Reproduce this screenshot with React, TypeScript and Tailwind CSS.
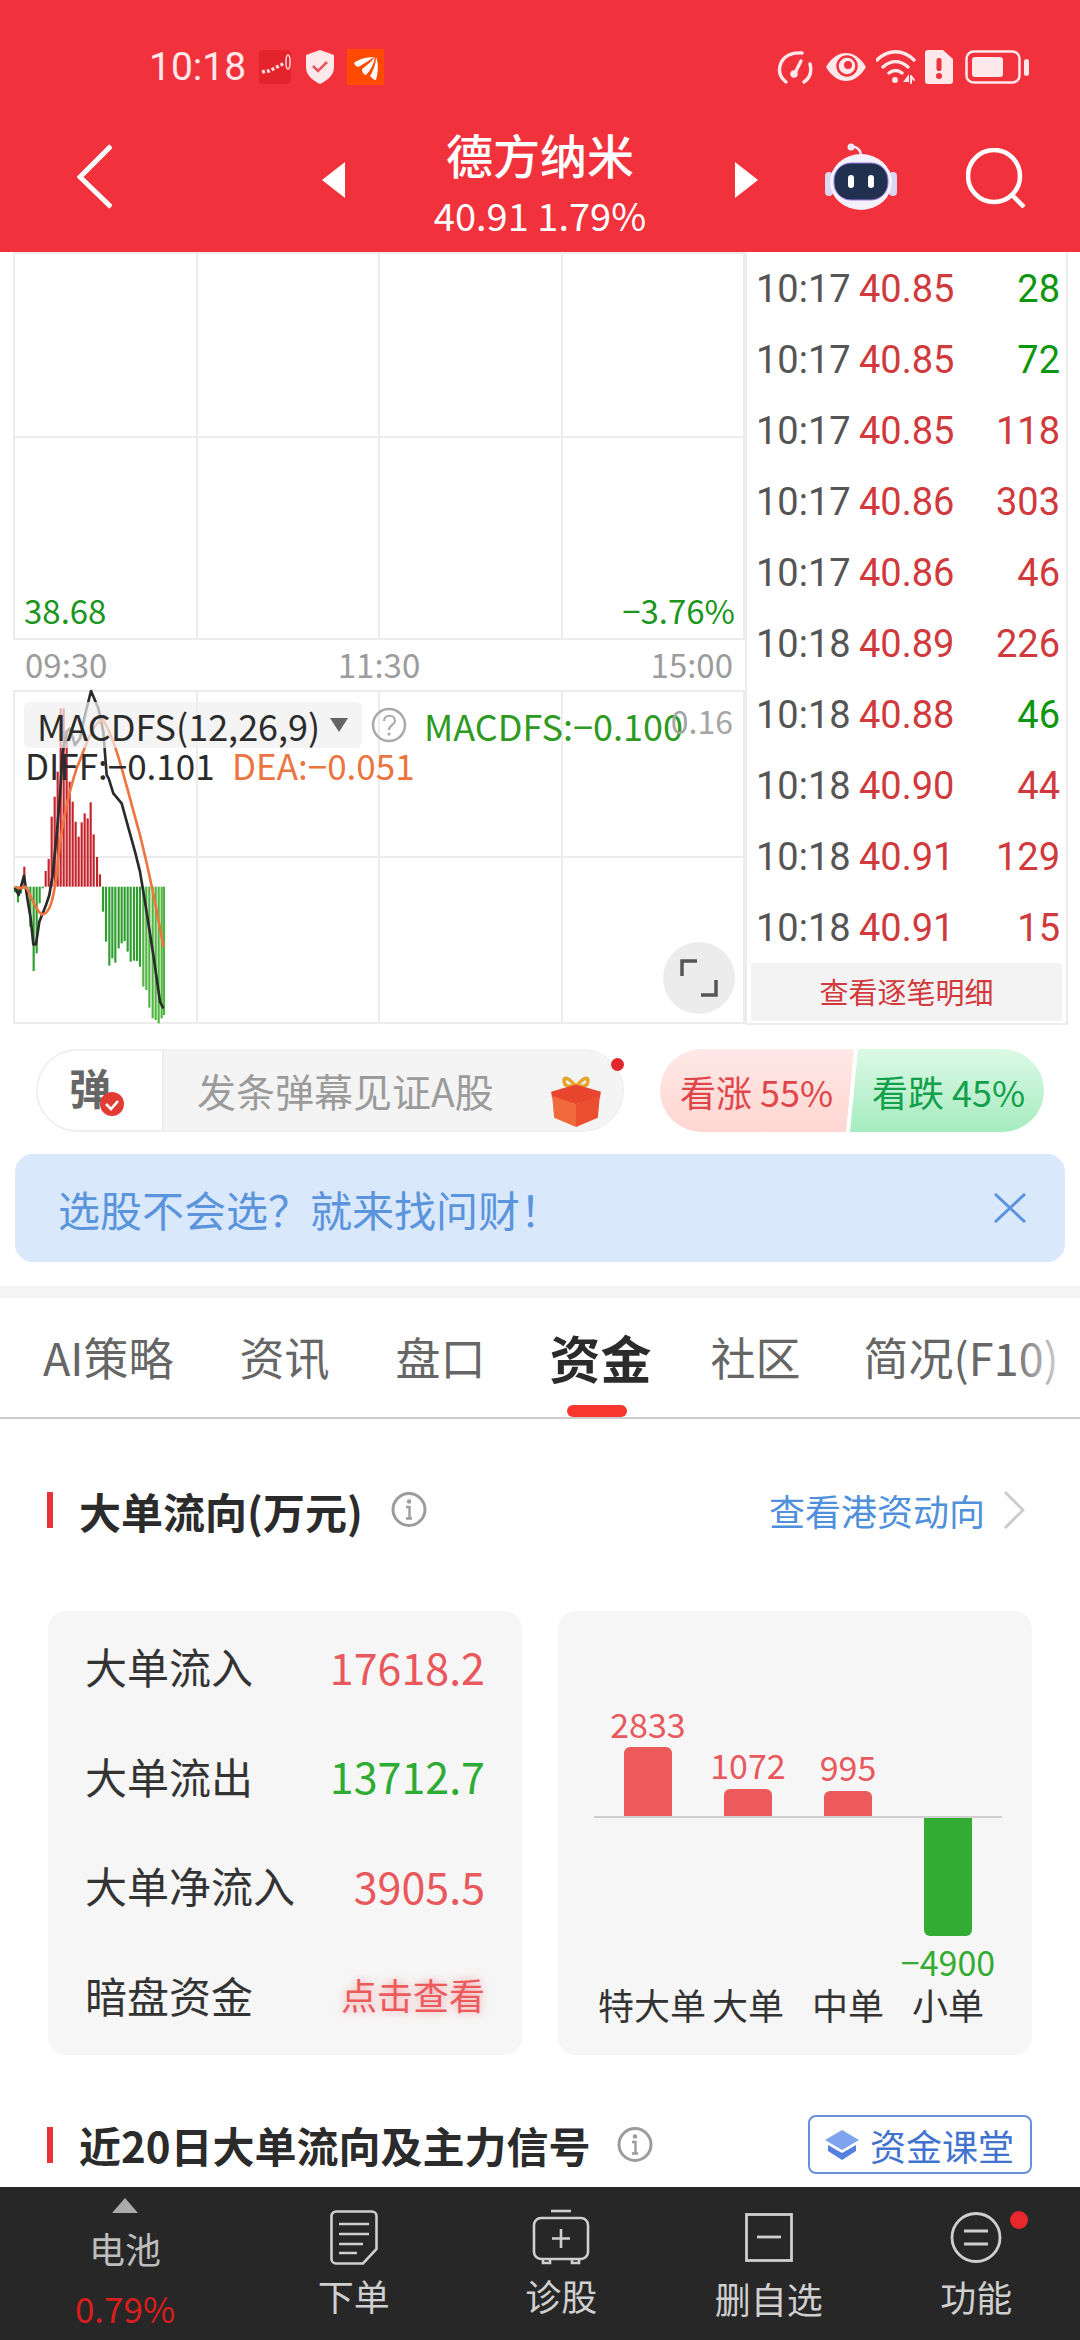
import React from "react";

const ticks = [
  ["10:17", "40.85", "28", "g"],
  ["10:17", "40.85", "72", "g"],
  ["10:17", "40.85", "118", "r"],
  ["10:17", "40.86", "303", "r"],
  ["10:17", "40.86", "46", "r"],
  ["10:18", "40.89", "226", "r"],
  ["10:18", "40.88", "46", "g"],
  ["10:18", "40.90", "44", "r"],
  ["10:18", "40.91", "129", "r"],
  ["10:18", "40.91", "15", "r"],
];

// macd bars, drawn in a 510x1035 box (3x of real pixels), baseline at y=605
const macdBars = [
  [15, 622], [24, 652], [33, 625], [43, 545], [52, 640], [61, 725], [71, 858], [80, 805], [89, 655], [98, 610],
  [107, 558], [116, 522], [125, 395], [134, 335], [143, 260], [152, 70], [161, 70], [170, 165], [179, 290], [188, 350],
  [197, 410], [206, 455], [215, 412], [224, 385], [233, 400], [242, 352], [251, 448], [261, 516], [270, 568],
  [279, 680], [288, 770], [298, 842], [307, 820], [316, 833], [326, 790], [335, 775], [344, 768], [353, 800], [362, 830],
  [372, 827], [381, 828], [390, 845], [400, 905], [409, 915], [418, 968], [428, 1000], [437, 1005], [446, 1015], [455, 1000], [462, 990],
];

function MacdChart() {
  return (
    <svg className="absolute left-[-3px] top-[-5px]" width="170" height="345" viewBox="0 0 510 1035" fill="none">
      {macdBars.map(([x, y], i) => (
        <line key={i} x1={x} x2={x} y1={605} y2={y} stroke={y < 605 ? "#c5232b" : y > 880 ? "#4fb53f" : "#2f9e2f"} strokeWidth="6.5" />
      ))}
      <path
        d="M15 608 L26 630 L42 572 L52 640 L62 700 L70 778 L78 778 L88 710 L96 690 L108 660 L118 630 L128 570 L140 450 L150 330 L158 200 L170 140 L180 130 L195 180 L210 160 L225 90 L243 18 L265 70 L280 140 L290 270 L296 280 L310 325 L335 355 L350 410 L375 500 L390 560 L405 650 L430 810 L450 950 L460 970"
        stroke="#2b2b2b"
        strokeWidth="8"
        strokeLinejoin="round"
      />
      <path
        d="M15 605 C25 610 35 612 45 605 C60 615 70 670 95 688 C120 690 130 640 140 570 C150 450 170 340 200 250 C225 190 250 105 280 105 C320 170 350 310 390 450 C420 570 445 700 460 785"
        stroke="#ee7440"
        strokeWidth="8"
        strokeLinejoin="round"
      />
    </svg>
  );
}

function GridLines({ rows }: { rows: string }) {
  return (
    <div className={`grid h-full w-[732px] grid-cols-4 border-t-2 border-l-2 border-[#ececec] ${rows}`}>
      {Array.from({ length: 8 }).map((_, i) => (
        <div key={i} className="border-r-2 border-b-2 border-[#ececec]" />
      ))}
    </div>
  );
}

function InfoIcon() {
  return (
    <svg width="36" height="37" viewBox="0 0 36 37" fill="none" stroke="#9c9c9c" strokeWidth="3">
      <circle cx="18" cy="18.5" r="16" />
      <circle cx="18" cy="10.5" r="2.2" fill="#9c9c9c" stroke="none" />
      <path d="M15 16h3.5v11M15 27.5h6" strokeWidth="2.4" />
    </svg>
  );
}

function SectionBar() {
  return <div className="h-[36px] w-[6px] bg-[#e63438]" />;
}

function NavLabel({ label }: { label: string }) {
  return <span className="mt-[8px] text-[36px] leading-[44px] text-[#cfcfcf]">{label}</span>;
}

export default function App() {
  return (
    <div className="flex h-[2340px] w-[1080px] flex-col overflow-hidden bg-white font-['Noto_Sans_CJK_SC','Noto_Sans',sans-serif]">
      <div className="flex-1 overflow-hidden">
        {/* header */}
        <header className="h-[252px] bg-[#f1323c] text-white">
          <div className="mt-0 flex h-[50px] translate-y-[42px] items-center justify-between pr-[50px] pl-[149px]">
            <div className="flex items-center">
              <span className="font-['Roboto',sans-serif] text-[39px] text-[#ffe8ea]">10:18</span>
              <svg className="ml-[13px]" width="32" height="34" viewBox="0 0 32 34">
                <rect width="32" height="34" rx="4" fill="#e4242c" />
                <path d="M3 22l4-1 3 0 4-2 4-2 4-2 3-2" stroke="#ffd8d8" strokeWidth="3.5" strokeDasharray="3 2" fill="none" />
                <ellipse cx="29" cy="12" rx="2" ry="7" fill="none" stroke="#ffd8d8" strokeWidth="1.5" />
              </svg>
              <svg className="ml-[15px]" width="28" height="34" viewBox="0 0 28 34">
                <path d="M14 0l14 5v12c0 8-6 13-14 17C6 30 0 25 0 17V5z" fill="#ffe8ea" />
                <path d="M7 16l5 5 9-9" fill="none" stroke="#e5555c" strokeWidth="2.5" />
              </svg>
              <svg className="ml-[13px]" width="37" height="36" viewBox="0 0 37 36">
                <rect width="37" height="36" fill="#ff4a00" />
                <path d="M27 8C20 8 12 10 7 14c1 3 4 5 6 3 5-3 10-6 14-9z" fill="#fff" />
                <path d="M28 8c-4 5-8 8-13 12 0 3 2 6 4 6 4-4 8-11 9-18z" fill="#fff" />
                <path d="M29 8c0 8-4 16-6 19 2 2 4 4 6 4 2-7 3-16 0-23z" fill="#fff" />
              </svg>
            </div>
            <div className="flex items-center">
              <svg width="36" height="34" viewBox="0 0 36 34" fill="none" stroke="#ffe8ea" strokeWidth="3.4" strokeLinecap="round">
                <path d="M9 32C3 27 1 20 4 13 7 6 15 2 25 3" />
                <path d="M27 32c6-4 8-10 6-18" />
                <path d="M18 23l6-12" />
                <circle cx="17" cy="24" r="2" fill="#ffe8ea" />
              </svg>
              <svg className="ml-[12px]" width="42" height="30" viewBox="0 0 42 30">
                <path d="M1 15C7 5 14 1 21 1s14 4 20 14c-6 10-13 14-20 14S7 25 1 15z" fill="#ffe8ea" />
                <circle cx="22" cy="14" r="9.5" fill="none" stroke="#f1323c" strokeWidth="2.5" />
                <circle cx="23" cy="13" r="4" fill="#f1323c" />
              </svg>
              <svg className="ml-[9px]" width="41" height="34" viewBox="0 0 41 34" fill="none" stroke="#ffe8ea" strokeWidth="3.4" strokeLinecap="round">
                <path d="M1 10c11-11 26-11 37 0M7 17c8-7 17-7 25 0M13 23c4-3 9-3 13 0" />
                <circle cx="19" cy="30" r="3" fill="#ffe8ea" stroke="none" />
                <path d="M29 31l3-4v4zM35 26v7M35 26l3 4" strokeWidth="2" />
              </svg>
              <svg className="ml-[8px]" width="28" height="34" viewBox="0 0 28 34">
                <path d="M3 0h15l10 9v22a3 3 0 01-3 3H3a3 3 0 01-3-3V3a3 3 0 013-3z" fill="#ffe8ea" />
                <rect x="11.5" y="8" width="5" height="13" rx="2" fill="#f1323c" />
                <circle cx="14" cy="26" r="3" fill="#f1323c" />
              </svg>
              <svg className="ml-[12px]" width="65" height="34" viewBox="0 0 65 34">
                <rect x="1.5" y="1.5" width="53" height="31" rx="7" fill="none" stroke="#ffe8ea" strokeWidth="2.5" />
                <rect x="7" y="7" width="31" height="20" rx="3" fill="#ffe8ea" />
                <rect x="59" y="9" width="5" height="17" rx="2.5" fill="#ffe8ea" />
              </svg>
            </div>
          </div>

          <div className="flex h-[110px] translate-y-[80px] items-start">
            <svg className="mt-[14px] ml-[77px]" width="35" height="65" viewBox="0 0 35 65" fill="none" stroke="#fff" strokeWidth="5">
              <path d="M34 2L3 33l31 30" />
            </svg>
            <svg className="mt-[32px] ml-[210px]" width="23" height="36" viewBox="0 0 23 36">
              <path d="M23 0v36L0 18z" fill="#fff" />
            </svg>
            <div className="flex w-[390px] flex-col items-center">
              <div className="-mt-[1px] text-[47px] leading-[50px] font-medium">德方纳米</div>
              <div className="mt-[14px] text-[38px] leading-[44px]">40.91 1.79%</div>
            </div>
            <svg className="mt-[32px]" width="23" height="36" viewBox="0 0 23 36">
              <path d="M0 0v36l23-18z" fill="#fff" />
            </svg>
            <svg className="mt-[13px] ml-[67px]" width="72" height="67" viewBox="0 0 72 67">
              <path d="M26 4c5-1 9 2 10 7" fill="none" stroke="#ece8fa" strokeWidth="2.5" />
              <circle cx="26" cy="4" r="3.5" fill="#ece8fa" />
              <rect x="0" y="29" width="8" height="24" rx="4" fill="#dcd8f4" />
              <rect x="64" y="29" width="8" height="24" rx="4" fill="#dcd8f4" />
              <ellipse cx="36" cy="39" rx="31" ry="28" fill="#f3f1fc" />
              <rect x="9" y="20" width="54" height="37" rx="17" fill="#22304f" stroke="#9b7be8" strokeWidth="1" />
              <rect x="23" y="32" width="6" height="13" rx="3" fill="#fff" />
              <rect x="43" y="32" width="6" height="13" rx="3" fill="#fff" />
            </svg>
            <svg className="mt-[18px] ml-[69px]" width="60" height="60" viewBox="0 0 60 60" fill="none" stroke="#fff" strokeWidth="4.5">
              <circle cx="28" cy="28" r="26" />
              <path d="M46 47l12 12" />
            </svg>
          </div>
        </header>

        {/* charts + tick list */}
        <div className="flex h-[773px] pl-[13px]">
          <div className="w-[732px] shrink-0">
            <div className="relative h-[388px]">
              <GridLines rows="grid-rows-[184px_1fr]" />
              <span className="absolute top-[338px] left-[11px] text-[33px] leading-[40px] text-[#1b951b]">38.68</span>
              <span className="absolute top-[338px] right-[10px] text-[33px] leading-[40px] text-[#1b951b]">−3.76%</span>
            </div>
            <div className="flex h-[50px] items-center justify-between pr-[12px] pl-[12px] text-[33px] text-[#9c9c9c]">
              <span>09:30</span>
              <span>11:30</span>
              <span>15:00</span>
            </div>
            <div className="relative h-[334px]">
              <GridLines rows="grid-rows-2" />
              <MacdChart />
              <div className="absolute top-[12px] left-[11px] flex h-[46px] w-[338px] items-center rounded-[6px] bg-[#efefef]/70 pl-[13px] text-[36px] leading-none whitespace-nowrap text-[#2b2b2b]">
                MACDFS(12,26,9)
                <svg className="ml-[10px]" width="18" height="14" viewBox="0 0 18 14">
                  <path d="M0 0h18L9 14z" fill="#666" />
                </svg>
              </div>
              <svg className="absolute top-[17px] left-[358px]" width="36" height="36" viewBox="0 0 36 36" fill="none">
                <circle cx="18" cy="18" r="16" stroke="#aaa" strokeWidth="2.5" />
                <path d="M13 14c0-7 11-7 11 0 0 4-6 4-6 9" stroke="#aaa" strokeWidth="2.2" />
                <circle cx="18" cy="27" r="1.6" fill="#aaa" />
              </svg>
              <span className="absolute top-[15px] left-[411px] text-[36px] leading-[40px] whitespace-nowrap text-[#2f9a22]">MACDFS:−0.100</span>
              <span className="absolute top-[10px] right-[12px] text-[32px] leading-[40px] text-[#a5a5a5]">0.16</span>
              <span className="absolute top-[55px] left-[12px] text-[35px] leading-[40px] whitespace-nowrap text-[#2b2b2b]">DIFF:−0.101</span>
              <span className="absolute top-[55px] left-[219px] text-[35px] leading-[40px] whitespace-nowrap text-[#ea7540]">DEA:−0.051</span>
              <div className="absolute top-[252px] right-[10px] flex h-[72px] w-[72px] items-center justify-center rounded-full bg-[#ececec]">
                <svg width="38" height="38" viewBox="0 0 38 38" fill="none" stroke="#555" strokeWidth="3.5">
                  <path d="M2 17V2h15M36 21v15H21" />
                </svg>
              </div>
            </div>
          </div>
          <div className="h-[773px] w-[323px] border-x-2 border-b-2 border-[#ececec] pt-[1px]">
            {ticks.map(([t, p, v, c], i) => (
              <div key={i} className="flex h-[71px] items-center pl-[9px] font-['Roboto',sans-serif] text-[38px] leading-none">
                <span className="w-[103px] text-[#555]">{t}</span>
                <span className="text-[#d03a3d]">{p}</span>
                <span className={`ml-auto pr-[6px] ${c === "g" ? "text-[#0e960e]" : "text-[#d03a3d]"}`}>{v}</span>
              </div>
            ))}
            <div className="mx-[4px] flex h-[58px] items-center justify-center bg-[#f3f3f3] text-[29px] text-[#d2393c]">
              查看逐笔明细
            </div>
          </div>
        </div>

        {/* barrage + vote */}
        <div className="mt-[24px] flex h-[83px] pl-[36px]">
          <div className="relative flex w-[588px] overflow-visible rounded-full border-2 border-[#efefef]">
            <div className="relative flex w-[124px] items-center justify-center rounded-l-full bg-white">
              <span className="mr-[20px] mb-[8px] text-[42px] leading-none font-bold text-[#666]">弹</span>
              <svg className="absolute top-[41px] left-[62px]" width="24" height="24" viewBox="0 0 24 24" fill="none">
                <circle cx="12" cy="12" r="12" fill="#e23b33" />
                <path d="M6 12l5 5 7-8" stroke="#fff" strokeWidth="2.6" />
              </svg>
            </div>
            <div className="flex flex-1 items-center rounded-r-full border-l-2 border-[#eee] bg-[#f4f4f4] pl-[33px] text-[39px] whitespace-nowrap text-[#9b9b9b]">
              发条弹幕见证A股
              <svg className="absolute top-[22px] left-[512px]" width="52" height="54" viewBox="0 0 50 52">
                <path d="M24 12C16 2 12 4 14 10c1 3 6 3 10 2zM26 12c8-10 12-8 10-2-1 3-6 3-10 2z" fill="none" stroke="#e6a52c" strokeWidth="3.5" />
                <path d="M1 18l24-7 24 7-1 6-23 6L2 24z" fill="#e7452e" />
                <path d="M2 22l23 8v22L4 43z" fill="#f06a3c" />
                <path d="M48 22l-23 8v22l21-9z" fill="#e94e2f" />
              </svg>
            </div>
            <span className="absolute top-[7px] right-[-2px] h-[13px] w-[13px] rounded-full bg-[#e2272d]" />
          </div>
          <div className="ml-[36px] flex h-[83px]">
            <div className="flex w-[194px] items-center rounded-l-full bg-gradient-to-b from-[#ffe9e6] to-[#ffd6d2] pl-[20px] text-[36px] whitespace-nowrap text-[#e0454a] [clip-path:polygon(0_0,100%_0,186px_100%,0_100%)]">
              看涨 55%
            </div>
            <div className="-ml-[4px] flex w-[194px] items-center rounded-r-full bg-gradient-to-b from-[#dcf9e6] to-[#a5ebc0] pl-[22px] text-[36px] whitespace-nowrap text-[#13a04b] [clip-path:polygon(8px_0,100%_0,100%_100%,0_100%)]">
              看跌 45%
            </div>
          </div>
        </div>

        {/* banner */}
        <div className="mx-[15px] mt-[22px] flex h-[108px] items-center justify-between rounded-[18px] bg-[#d9e8fb] pr-[39px] pl-[43px] text-[42px] text-[#5a94dc]">
          <span className="whitespace-nowrap">选股不会选？就来找问财！</span>
          <svg width="32" height="30" viewBox="0 0 32 30" fill="none" stroke="#5a94dc" strokeWidth="3">
            <path d="M1 1l30 28M31 1L1 29" />
          </svg>
        </div>

        <div className="mt-[24px] h-[12px] bg-[#f5f5f5]" />

        {/* tabs */}
        <div className="relative flex h-[121px] items-center gap-[66px] overflow-hidden border-b-2 border-[#cccccc] pb-[1px] pl-[43px] text-[45px] whitespace-nowrap text-[#666]">
          <span>AI策略</span>
          <span>资讯</span>
          <span>盘口</span>
          <span className="relative -mr-[7px] -ml-[2px] text-[51px] font-bold text-[#2b2b2b]">资金</span>
          <span>社区</span>
          <span className="-ml-[3px]">简况(F10)</span>
          <span className="absolute bottom-0 left-[567px] h-[12px] w-[60px] rounded-full bg-[#f8362f]" />
          <span className="absolute top-0 right-0 h-full w-[70px] bg-gradient-to-r from-white/0 to-white" />
        </div>

        {/* big order flow */}
        <div className="mt-[71px] flex h-[40px] items-center pr-[55px] pl-[47px]">
          <SectionBar />
          <span className="ml-[26px] text-[42px] font-bold whitespace-nowrap text-[#2b2b2b]">大单流向(万元)</span>
          <span className="ml-[28px] -translate-y-[1px]">
            <InfoIcon />
          </span>
          <span className="ml-auto text-[36px] text-[#4f8fdb]">查看港资动向</span>
          <svg className="ml-[18px]" width="22" height="40" viewBox="0 0 22 40" fill="none" stroke="#ccc" strokeWidth="3">
            <path d="M2 2l18 18L2 38" />
          </svg>
        </div>

        <div className="mt-[81px] flex gap-[36px] px-[48px]">
          <div className="grid h-[444px] w-[474px] grid-rows-4 rounded-[18px] bg-[#f6f6f6] pr-[37px] pb-[6px] pl-[37px] text-[42px] text-[#333]">
            <div className="flex items-center justify-between">
              <span>大单流入</span>
              <span className="text-[43px] text-[#e8585c]">17618.2</span>
            </div>
            <div className="flex items-center justify-between">
              <span>大单流出</span>
              <span className="text-[43px] text-[#2eab35]">13712.7</span>
            </div>
            <div className="flex items-center justify-between">
              <span>大单净流入</span>
              <span className="text-[43px] text-[#e8585c]">3905.5</span>
            </div>
            <div className="flex items-center justify-between">
              <span>暗盘资金</span>
              <span className="text-[36px] text-[#ec5a5c] [text-shadow:0_0_10px_rgba(236,90,92,0.55)]">点击查看</span>
            </div>
          </div>

          <div className="h-[444px] w-[474px] rounded-[18px] bg-[#f6f6f6] pr-[30px] pl-[36px]">
            <div className="grid h-[207px] grid-cols-4 items-end border-b-2 border-[#cfcfcf] px-[4px] text-[34px] leading-[40px] text-[#e8585c]">
              <div className="flex flex-col items-center">
                <span className="mb-[3px]">2833</span>
                <div className="h-[69px] w-[48px] rounded-t-[6px] bg-[#ec5a5c]" />
              </div>
              <div className="flex flex-col items-center">
                <span className="mb-[4px]">1072</span>
                <div className="h-[27px] w-[48px] rounded-t-[6px] bg-[#ec5a5c]" />
              </div>
              <div className="flex flex-col items-center">
                <span className="mb-[4px]">995</span>
                <div className="h-[25px] w-[48px] rounded-t-[6px] bg-[#ec5a5c]" />
              </div>
              <div />
            </div>
            <div className="grid h-[148px] grid-cols-4 px-[4px]">
              <div />
              <div />
              <div />
              <div className="flex flex-col items-center whitespace-nowrap">
                <div className="h-[118px] w-[48px] rounded-b-[6px] bg-[#34ac34]" />
                <span className="mt-[6px] text-[34px] leading-[40px] text-[#34ac34]">−4900</span>
              </div>
            </div>
            <div className="grid grid-cols-4 px-[4px] pt-[16px] text-[36px] leading-[44px] text-[#333]">
              <span className="text-center whitespace-nowrap">特大单</span>
              <span className="text-center">大单</span>
              <span className="text-center">中单</span>
              <span className="text-center">小单</span>
            </div>
          </div>
        </div>

        {/* 20 day flow title */}
        <div className="mt-[60px] flex h-[59px] items-center pr-[48px] pl-[47px]">
          <SectionBar />
          <span className="ml-[26px] text-[42px] font-bold whitespace-nowrap text-[#2b2b2b]">近20日大单流向及主力信号</span>
          <span className="ml-[26px]">
            <InfoIcon />
          </span>
          <div className="ml-auto flex h-[59px] w-[224px] items-center rounded-[8px] border-2 border-[#6a90d6] pl-[15px] text-[36px] whitespace-nowrap text-[#4272cf]">
            <svg width="34" height="30" viewBox="0 0 34 30">
              <path d="M17 0l17 10-17 10L0 10z" fill="#7ea4ee" />
              <path d="M3 15l14 8 14-8v6l-14 9-14-9z" fill="#5580e0" />
            </svg>
            <span className="ml-[11px]">资金课堂</span>
          </div>
        </div>
      </div>

      {/* bottom bar */}
      <nav className="grid h-[153px] shrink-0 grid-cols-[250px_repeat(4,207.5px)] bg-[#272727]">
        <div className="flex flex-col items-center pt-[11px]">
          <svg width="26" height="15" viewBox="0 0 26 15">
            <path d="M13 0l13 15H0z" fill="#aaa" />
          </svg>
          <span className="mt-[13px] text-[36px] leading-[44px] text-[#bdbdbd]">电池</span>
          <span className="mt-[16px] text-[35px] leading-[44px] text-[#d81e1e]">0.79%</span>
        </div>
        <div className="flex flex-col items-center pt-[23px]">
          <svg width="48" height="55" viewBox="0 0 48 55" fill="none" stroke="#cfcfcf" strokeWidth="2.6">
            <path d="M6 1.5h36a4.5 4.5 0 014.5 4.5v33L33 53.5H6A4.5 4.5 0 011.5 49V6A4.5 4.5 0 016 1.5z" />
            <path d="M9 14h30M9 24h30M9 34h24M9 43h18" />
          </svg>
          <NavLabel label="下单" />
        </div>
        <div className="flex flex-col items-center pt-[22px]">
          <svg width="58" height="56" viewBox="0 0 58 56" fill="none" stroke="#cfcfcf" strokeWidth="2.6">
            <path d="M19 2h20" />
            <rect x="2" y="9" width="54" height="41" rx="7" />
            <path d="M29 20v19M20 29.5h18" />
            <path d="M11 50v4h7v-4M40 50v4h7v-4" />
          </svg>
          <NavLabel label="诊股" />
        </div>
        <div className="flex flex-col items-center pt-[26px]">
          <svg width="48" height="49" viewBox="0 0 48 49" fill="none" stroke="#cfcfcf" strokeWidth="2.8">
            <rect x="1.5" y="1.5" width="45" height="46" />
            <path d="M12 24h24" />
          </svg>
          <span className="mt-[14px] text-[36px] leading-[44px] text-[#cfcfcf]">删自选</span>
        </div>
        <div className="relative flex flex-col items-center pt-[25px]">
          <svg width="52" height="51" viewBox="0 0 52 51" fill="none" stroke="#cfcfcf" strokeWidth="2.8">
            <circle cx="26" cy="25.5" r="24" />
            <path d="M14 19h24M14 32h24" />
          </svg>
          <span className="mt-[11px] text-[36px] leading-[44px] text-[#cfcfcf]">功能</span>
          <span className="absolute top-[24px] left-[137px] h-[18px] w-[18px] rounded-full bg-[#e8282d]" />
        </div>
      </nav>
    </div>
  );
}
